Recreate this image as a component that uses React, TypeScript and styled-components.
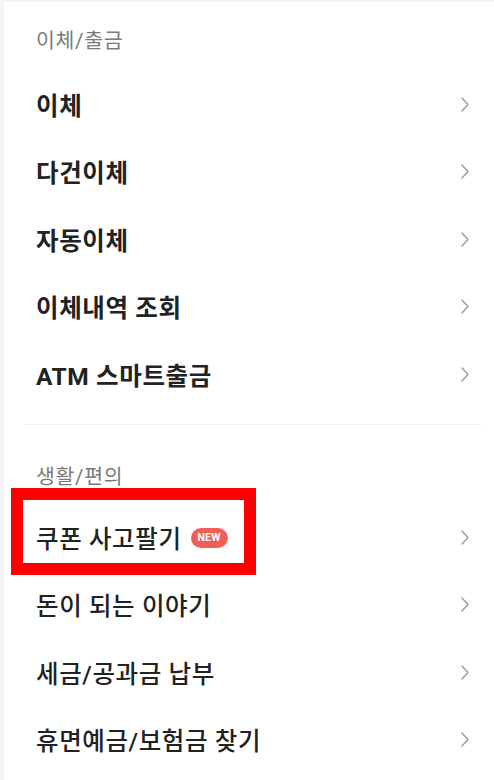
import React from "react";
import styled, { createGlobalStyle } from "styled-components";

const Global = createGlobalStyle`
  html, body { margin: 0; padding: 0; background: #ffffff; }
  body { font-family: Roboto, "Noto Sans CJK KR", sans-serif; -webkit-font-smoothing: antialiased; }
`;

const Page = styled.div`
  position: relative;
  width: 494px;
  height: 780px;
  box-sizing: border-box;
  border-top: 2px solid #f4f4f4;
  border-left: 4px solid #f4f4f4;
  background: #fff;
  overflow: hidden;
`;

const Section = styled.section<{ $top: number; $gap: number; $row: number }>`
  display: flex;
  flex-direction: column;
  padding-top: ${(p) => p.$top}px;
  & > h2 { margin-bottom: ${(p) => p.$gap}px; }
  & > div { height: ${(p) => p.$row}px; }
`;

const Header = styled.h2`
  margin: 0;
  padding-left: 32px;
  height: 28px;
  line-height: 28px;
  font-size: 20.5px;
  font-weight: 400;
  color: #7a7a7a;
  letter-spacing: 0.7px;
`;

const Row = styled.div`
  display: flex;
  align-items: center;
  justify-content: space-between;
  height: 67.5px;
  padding: 0 25px 0 32px;
`;

const Label = styled.span<{ $bold?: boolean }>`
  display: flex;
  align-items: center;
  gap: 9px;
  font-size: 24.5px;
  font-weight: ${(p) => (p.$bold ? 700 : 500)};
  color: #222;
  letter-spacing: 0.6px;
`;

const Badge = styled.span`
  display: inline-flex;
  align-items: center;
  justify-content: center;
  width: 37px;
  height: 20px;
  border-radius: 10px;
  background: #ef5f58;
  color: #fff;
  font-family: Roboto, sans-serif;
  font-size: 10.5px;
  font-weight: 700;
  letter-spacing: 0.2px;
`;

const Divider = styled.hr`
  margin: 16px 12px 0 22px;
  border: 0;
  height: 1px;
  background: #f0f0f0;
`;

const Highlight = styled.div`
  position: absolute;
  left: 7px;
  top: 486px;
  width: 221px;
  height: 63px;
  border: 12px solid #ff0000;
  pointer-events: none;
`;

const Chevron = () => (
  <svg width="8" height="15" viewBox="0 0 8 15" fill="none">
    <path d="M1 1l6 6.5L1 14" stroke="#9b9b9b" strokeWidth="1.4" strokeLinecap="round" strokeLinejoin="round" />
  </svg>
);

type Item = { label: string; isNew?: boolean };

const first: Item[] = [
  { label: "이체" },
  { label: "다건이체" },
  { label: "자동이체" },
  { label: "이체내역 조회" },
  { label: "ATM 스마트출금" },
];

const second: Item[] = [
  { label: "쿠폰 사고팔기", isNew: true },
  { label: "돈이 되는 이야기" },
  { label: "세금/공과금 납부" },
  { label: "휴면예금/보험금 찾기" },
];

export default function App() {
  return (
    <>
      <Global />
      <Page>
        <Section $top={25} $gap={15.5} $row={67.5}>
          <Header>이체/출금</Header>
          {first.map((it) => (
            <Row key={it.label}>
              <Label $bold>{it.label}</Label>
              <Chevron />
            </Row>
          ))}
        </Section>
        <Divider />
        <Section $top={38} $gap={13} $row={67.3}>
          <Header>생활/편의</Header>
          {second.map((it) => (
            <Row key={it.label}>
              <Label>
                {it.label}
                {it.isNew && <Badge>NEW</Badge>}
              </Label>
              <Chevron />
            </Row>
          ))}
        </Section>
        <Highlight />
      </Page>
    </>
  );
}
